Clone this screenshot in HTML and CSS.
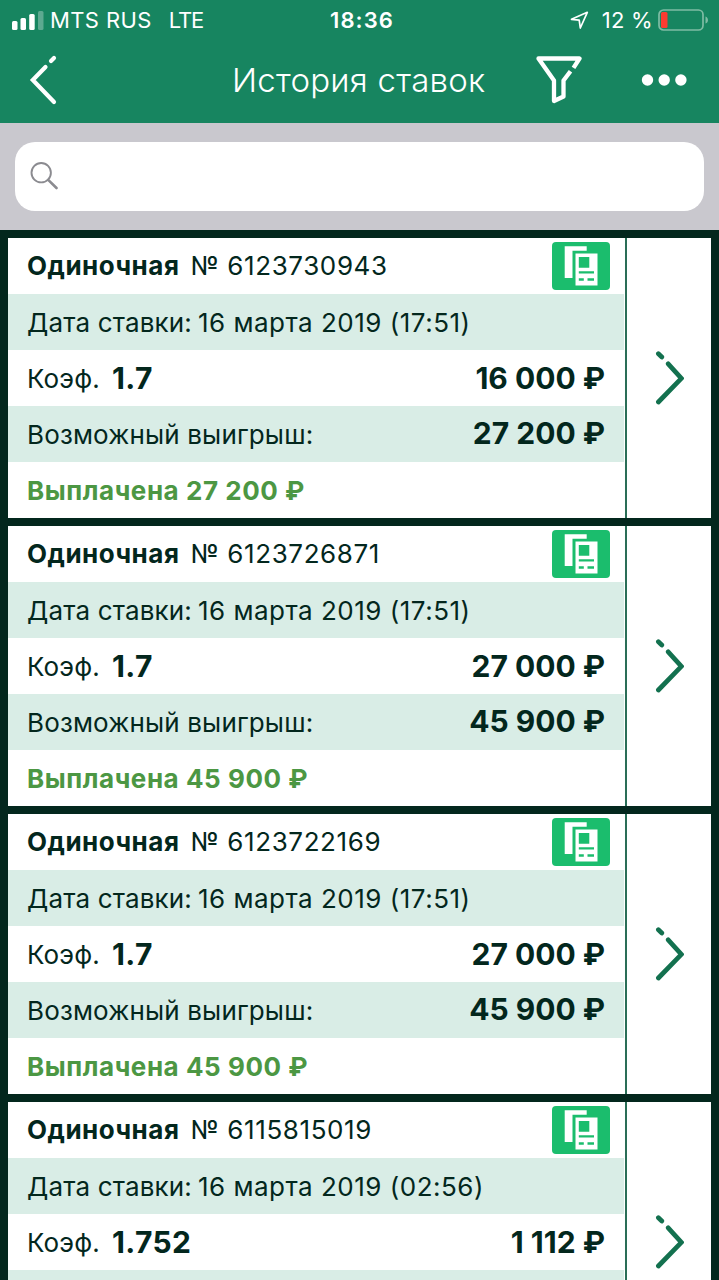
FILE: index.html
```html
<!DOCTYPE html>
<html lang="ru">
<head>
    <meta charset="UTF-8">
    <meta name="viewport" content="width=device-width, initial-scale=1.0">
    <title>История ставок</title>
    <link rel="stylesheet" href="styles.css">
</head>
<body>
    <svg class="sprite">
        <symbol id="icon-coupon" viewBox="0 0 58 48">
            <path d="M12.700 4.300h22v4.500H20.500V36H12.700z" fill="#fff"/>
            <path fill-rule="evenodd" d="M23.500 11.500h22v32h-22zM26.800 15v10.700h10.500v-10.700zM26.800 29.300v2.300h15.200v-2.300zM26.800 36.300v2.500h5v-2.500zM35.500 36.300v2.500h6.500v-2.500z" fill="#fff"/>
        </symbol>
        <symbol id="icon-next" viewBox="0 0 30 56">
            <path d="M4.400 3.700l3.400 3.300M14.200 13.800l13.200 14.500L4.400 52" fill="none" stroke="#13714f" stroke-width="4.700" stroke-linecap="round" stroke-linejoin="miter"/>
        </symbol>
    </svg>

    <header class="header">
        <div class="status-bar">
            <div class="status-left">
                <svg class="signal" width="32" height="19" viewBox="0 0 32 19">
                    <rect x="0" y="10" width="5.500" height="9" rx="1.500" fill="#fff"/>
                    <rect x="8.500" y="7" width="5.500" height="12" rx="1.500" fill="#fff"/>
                    <rect x="17.200" y="3" width="5.500" height="16" rx="1.500" fill="#fff"/>
                    <rect x="26" y="0" width="5.500" height="19" rx="1.500" fill="#fff" opacity=".3"/>
                </svg>
                <span class="carrier">MTS RUS</span>
                <span class="network">LTE</span>
            </div>
            <div class="clock">18:36</div>
            <div class="status-right">
                <svg class="location" width="19" height="19" viewBox="0 0 19 19">
                    <path d="M1.500 8.300L17.300 1.300L10.300 17L9.200 9.200z" fill="none" stroke="#fff" stroke-width="1.700" stroke-linejoin="round"/>
                </svg>
                <span class="percent">12 %</span>
                <svg class="battery" width="51" height="22" viewBox="0 0 51 22">
                    <rect x="1" y="1" width="44" height="20" rx="4.500" fill="none" stroke="#7fbca4" stroke-width="1.700"/>
                    <rect x="3" y="3" width="6.500" height="16" rx="1.500" fill="#fc3b30"/>
                    <path d="M47.500 7.500c3.300 1.200 3.300 6 0 7z" fill="#7fbca4"/>
                </svg>
            </div>
        </div>
        <nav class="nav-bar">
            <svg class="back" width="28" height="50" viewBox="0 0 28 50">
                <path d="M25 3L22 6M16.500 12L3.800 25L25 47" fill="none" stroke="#fff" stroke-width="4.200" stroke-linecap="round"/>
            </svg>
            <h1>История ставок</h1>
            <svg class="filter" width="46" height="50" viewBox="0 0 46 50">
                <path d="M37.500 12.800L43.500 3.500H2.500L18 25.500V46L27.500 41.500V25.500L34.500 16.300" fill="none" stroke="#fff" stroke-width="4.300" stroke-linejoin="round"/>
            </svg>
            <svg class="more" width="46" height="12" viewBox="0 0 46 12">
                <circle cx="6.500" cy="6" r="5.700" fill="#fff"/>
                <circle cx="23.200" cy="6" r="5.700" fill="#fff"/>
                <circle cx="39.900" cy="6" r="5.700" fill="#fff"/>
            </svg>
        </nav>
    </header>

    <div class="search-section">
        <div class="search-box">
            <svg width="28" height="28" viewBox="0 0 28 28">
                <circle cx="11.200" cy="10.700" r="9.700" fill="none" stroke="#8b8b90" stroke-width="1.900"/>
                <path d="M18.200 17.800L26.500 26" stroke="#8b8b90" stroke-width="2.600" stroke-linecap="round"/>
            </svg>
        </div>
    </div>

    <main class="bets">
        <div class="bet">
            <div class="bet-info">
                <div class="row raised"><span class="type">Одиночная</span><span class="number">№ 6123730943</span><svg class="coupon"><use href="#icon-coupon"/></svg></div>
                <div class="row shaded"><span class="label">Дата ставки:</span><span class="date">16 марта 2019 (17:51)</span></div>
                <div class="row raised"><span class="label">Коэф.</span><span class="odds">1.7</span><span class="amount">16 000 ₽</span></div>
                <div class="row shaded"><span class="label">Возможный выигрыш:</span><span class="amount">27 200 ₽</span></div>
                <div class="row"><span class="paid">Выплачена 27 200 ₽</span></div>
            </div>
            <div class="bet-open"><svg class="next"><use href="#icon-next"/></svg></div>
        </div>

        <div class="bet">
            <div class="bet-info">
                <div class="row raised"><span class="type">Одиночная</span><span class="number">№ 6123726871</span><svg class="coupon"><use href="#icon-coupon"/></svg></div>
                <div class="row shaded"><span class="label">Дата ставки:</span><span class="date">16 марта 2019 (17:51)</span></div>
                <div class="row raised"><span class="label">Коэф.</span><span class="odds">1.7</span><span class="amount">27 000 ₽</span></div>
                <div class="row shaded"><span class="label">Возможный выигрыш:</span><span class="amount">45 900 ₽</span></div>
                <div class="row"><span class="paid">Выплачена 45 900 ₽</span></div>
            </div>
            <div class="bet-open"><svg class="next"><use href="#icon-next"/></svg></div>
        </div>

        <div class="bet">
            <div class="bet-info">
                <div class="row raised"><span class="type">Одиночная</span><span class="number">№ 6123722169</span><svg class="coupon"><use href="#icon-coupon"/></svg></div>
                <div class="row shaded"><span class="label">Дата ставки:</span><span class="date">16 марта 2019 (17:51)</span></div>
                <div class="row raised"><span class="label">Коэф.</span><span class="odds">1.7</span><span class="amount">27 000 ₽</span></div>
                <div class="row shaded"><span class="label">Возможный выигрыш:</span><span class="amount">45 900 ₽</span></div>
                <div class="row"><span class="paid">Выплачена 45 900 ₽</span></div>
            </div>
            <div class="bet-open"><svg class="next"><use href="#icon-next"/></svg></div>
        </div>

        <div class="bet">
            <div class="bet-info">
                <div class="row raised"><span class="type">Одиночная</span><span class="number">№ 6115815019</span><svg class="coupon"><use href="#icon-coupon"/></svg></div>
                <div class="row shaded"><span class="label">Дата ставки:</span><span class="date">16 марта 2019 (02:56)</span></div>
                <div class="row raised"><span class="label">Коэф.</span><span class="odds">1.752</span><span class="amount">1 112 ₽</span></div>
                <div class="row shaded"></div>
            </div>
            <div class="bet-open"><svg class="next"><use href="#icon-next"/></svg></div>
        </div>
    </main>
</body>
</html>
```

FILE: styles.css
```css
* {
    box-sizing: border-box;
}
body {
    margin: 0;
    height: 100vh;
    overflow: hidden;
    display: flex;
    flex-direction: column;
    font-family: Inter, "Noto Sans", sans-serif;
    background-color: #03271d;
    color: #03271d;
}
svg {
    display: block;
    flex-shrink: 0;
}
.sprite {
    display: none;
}
.header {
    height: 123px;
    flex-shrink: 0;
    background-color: #178560;
    color: #fff;
}
.status-bar {
    display: grid;
    grid-template-columns: 1fr auto 1fr;
    align-items: center;
    height: 40px;
    padding: 0 10px 0 12px;
    font-size: 22px;
}
.status-left, .status-right {
    display: flex;
    align-items: center;
}
.status-right {
    justify-content: flex-end;
}
.carrier {
    margin-left: 6px;
    letter-spacing: 0.4px;
}
.network {
    margin-left: 17px;
    letter-spacing: -1.2px;
}
.clock {
    margin-left: 3px;
    font-weight: 600;
    letter-spacing: 1.1px;
}
.percent {
    margin: 0 5px 0 13px;
    letter-spacing: 0.3px;
}
.nav-bar {
    display: flex;
    align-items: center;
    height: 80px;
    padding: 0 32px 0 29px;
}
.nav-bar h1 {
    margin: 0 0 0 175px;
    width: 254px;
    font-size: 33px;
    font-weight: 300;
    letter-spacing: 0.25px;
    white-space: nowrap;
}
.filter {
    margin-left: 50px;
}
.more {
    margin-left: auto;
}
.search-section {
    height: 107px;
    flex-shrink: 0;
    padding: 19px 15px;
    background-color: #c9c8ce;
}
.search-box {
    height: 69px;
    padding: 20px 15px;
    border-radius: 20px;
    background-color: #fff;
}
.bets {
    flex: 1;
    min-height: 0;
    overflow: hidden;
    display: flex;
    flex-direction: column;
    gap: 8px;
    padding: 8px 8px 0;
}
.bet {
    display: flex;
    height: 280px;
    flex-shrink: 0;
    background-color: #fff;
}
.bet-info {
    width: 619px;
    border-right: 2px solid #2a6e57;
}
.row {
    display: flex;
    align-items: center;
    height: 56px;
    padding: 0 20px 0 19px;
    font-size: 26px;
    white-space: nowrap;
}
.raised .type, .raised .number {
    padding-bottom: 1px;
}
.shaded {
    margin-right: 1px;
    padding-right: 19px;
    background-color: #d9ede6;
}
.label {
    letter-spacing: 0.15px;
}
.date {
    margin-left: 6px;
    letter-spacing: 0.5px;
}
.type {
    font-weight: 700;
    letter-spacing: 0.5px;
}
.number {
    margin-left: 11px;
    letter-spacing: 0.6px;
}
.coupon {
    width: 58px;
    height: 48px;
    margin-left: auto;
    margin-right: -5px;
    border-radius: 4px;
    background-color: #1bbd6d;
}
.odds {
    margin-left: 12px;
    font-size: 30px;
    font-weight: 700;
    letter-spacing: 0.4px;
}
.amount {
    margin-left: auto;
    font-size: 30px;
    font-weight: 700;
}
.shaded .amount {
    padding-bottom: 2px;
}
.paid {
    font-weight: 700;
    letter-spacing: 0.55px;
    color: #4c9743;
}
.bet-open {
    flex: 1;
    display: flex;
    align-items: center;
    justify-content: center;
}
.next {
    width: 30px;
    height: 56px;
}
```
